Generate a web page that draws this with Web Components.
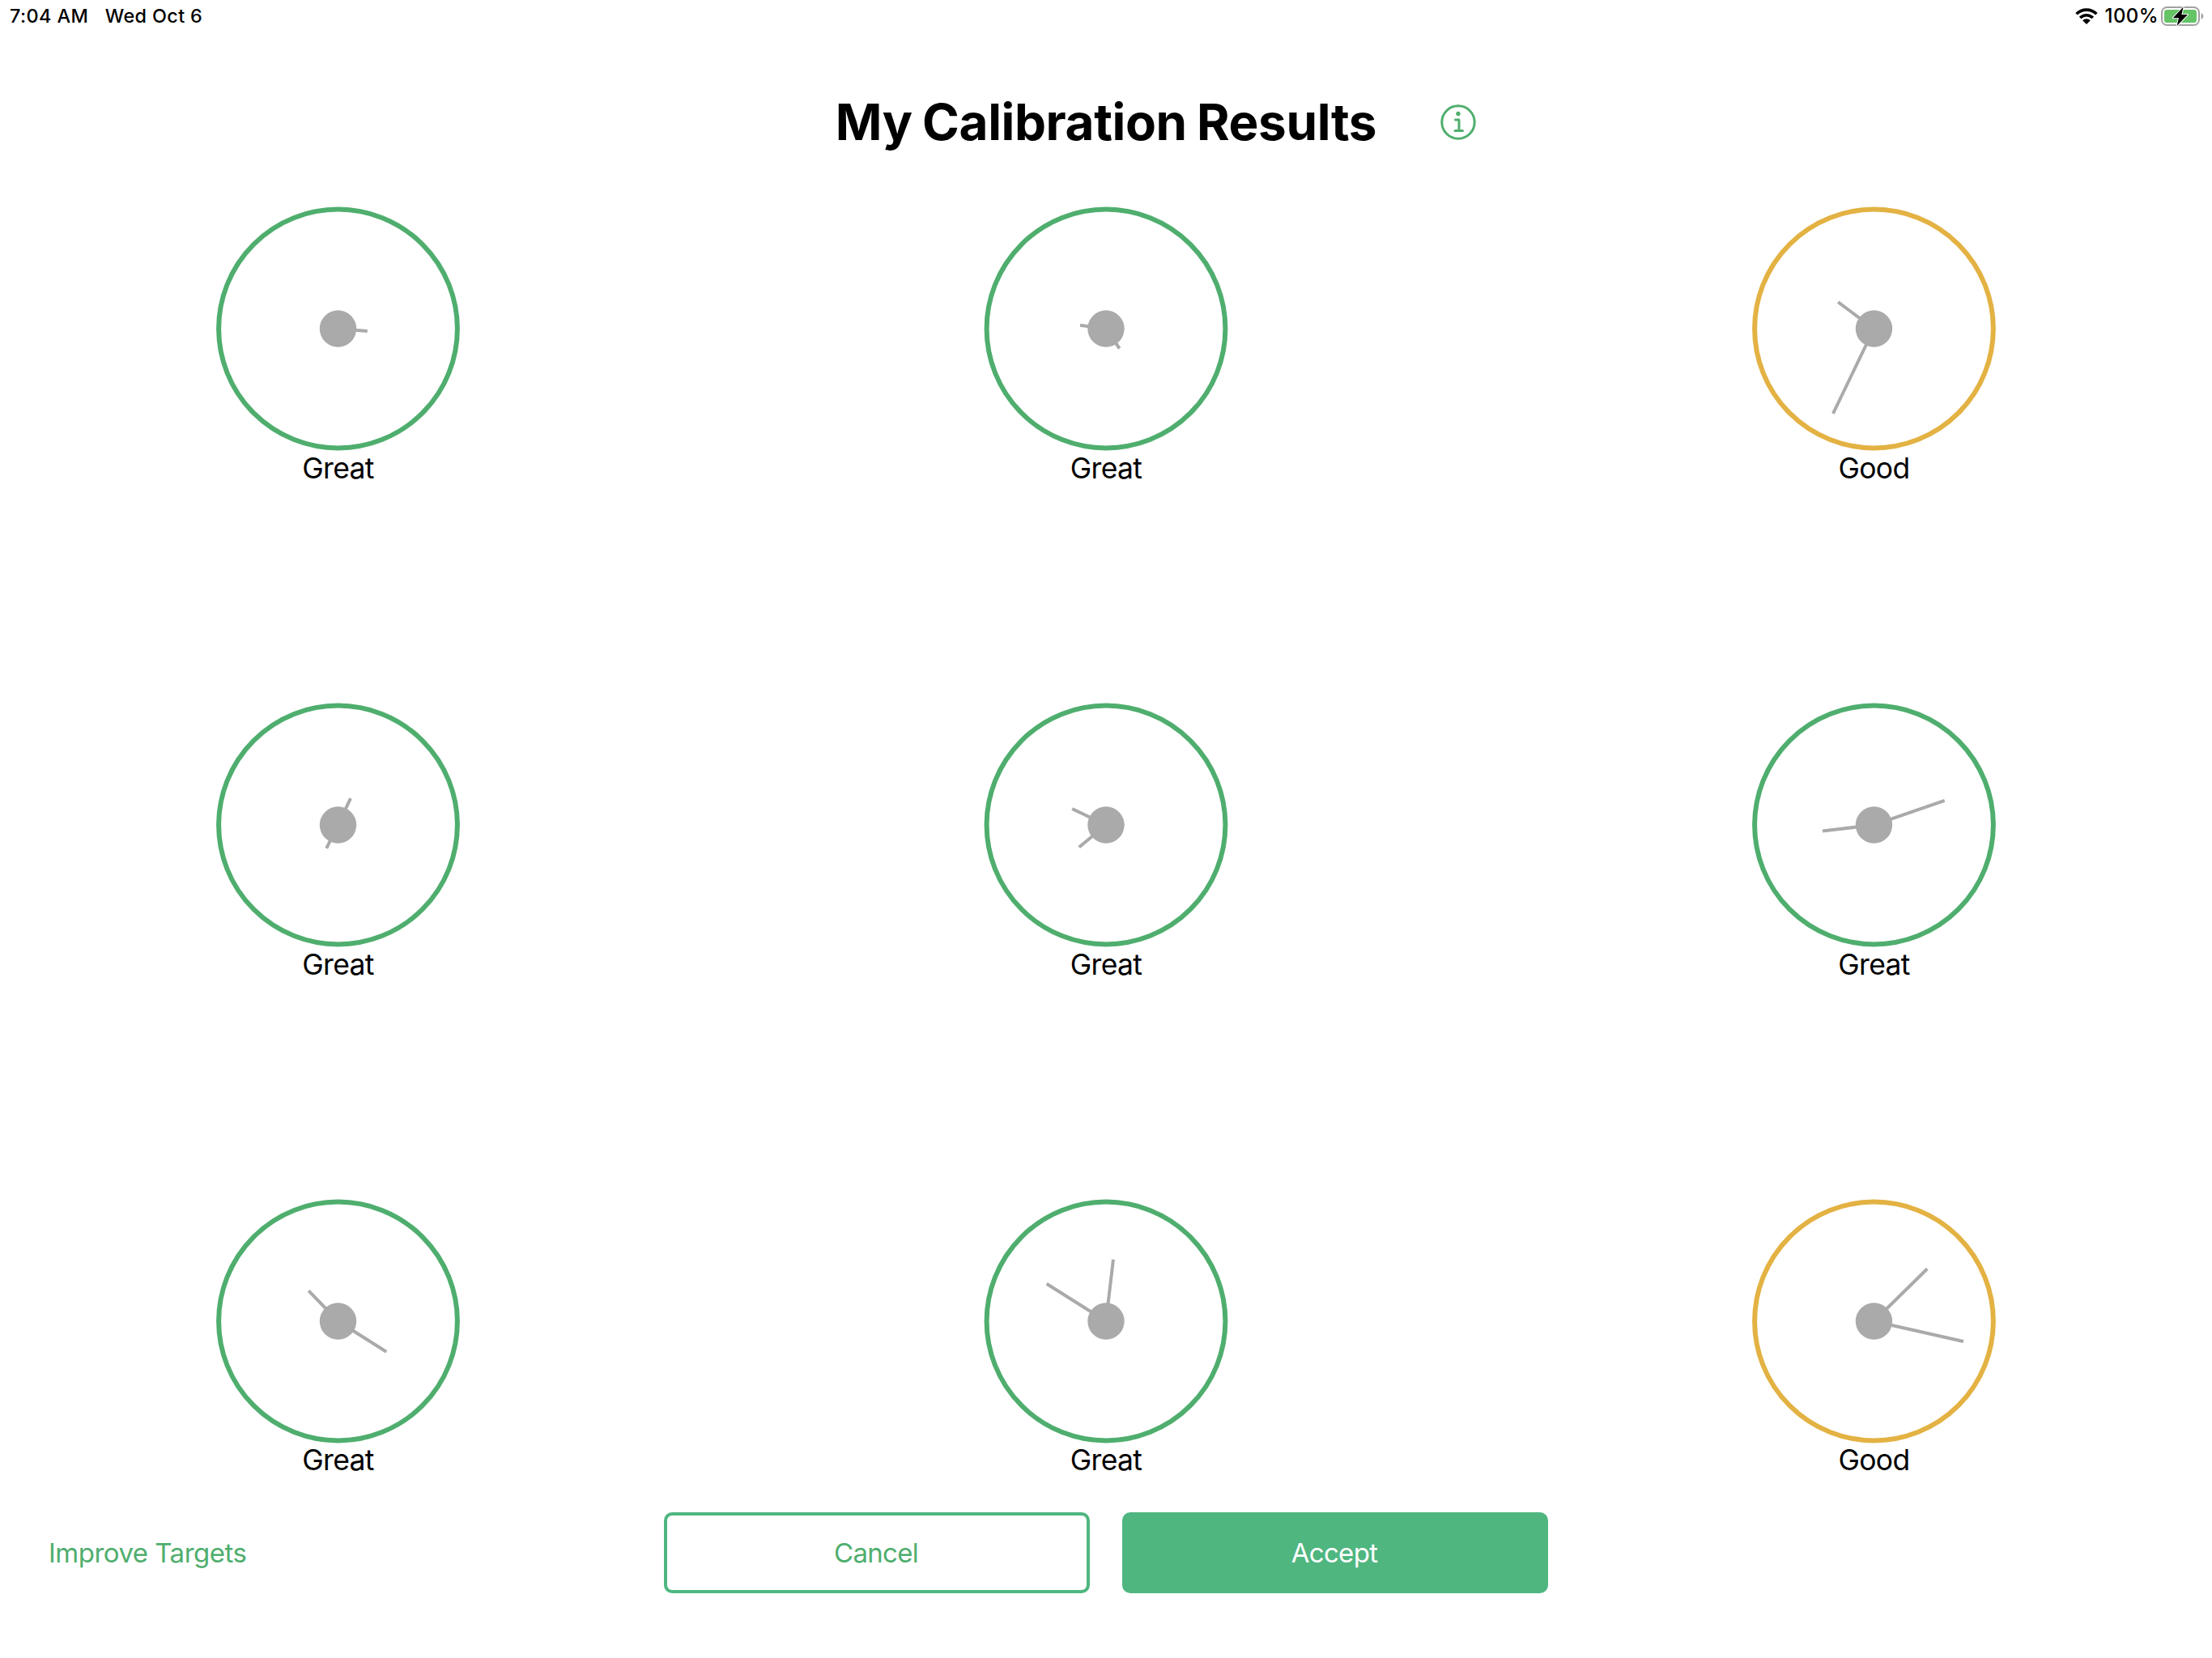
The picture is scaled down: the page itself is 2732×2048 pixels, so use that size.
<!DOCTYPE html>
<html lang="en">
<head>
<meta charset="utf-8">
<title>My Calibration Results</title>
<style>
  html, body { margin: 0; background: #fff; }
  body { font-family: Inter, "Liberation Sans", sans-serif; color: #000; }
</style>
</head>
<body>
<calibration-screen></calibration-screen>
<script>
  class StatusBar extends HTMLElement {
    constructor() {
      super();
      this.attachShadow({ mode: 'open' }).innerHTML = `
        <style>
          :host { display: flex; justify-content: space-between; height: 40px; padding: 0 9px 0 12px; box-sizing: border-box;
                  font-size: 23.4px; line-height: 40px; font-weight: 500; }
          div { display: flex; align-items: center; height: 40px; white-space: nowrap; }
          .clock { gap: 20.5px; }
          .time { letter-spacing: .42px; }
          .date { letter-spacing: .38px; }
          .level { font-size: 24px; letter-spacing: .4px; }
          svg { display: block; flex: none; }
          .wifi { margin-right: 9px; }
          .battery { margin-left: 3px; }
        </style>
        <div class="clock"><span class="time">7:04 AM</span><span class="date">Wed Oct 6</span></div>
        <div>
          <svg class="wifi" width="28" height="20" viewBox="0 0 28 20">
            <g fill="none" stroke="#000" stroke-width="3.7">
              <path d="M1.6 7.3A17.6 17.6 0 0 1 26.4 7.3"/>
              <path d="M6.2 12A11 11 0 0 1 21.8 12"/>
            </g>
            <path d="M14 20L9.2 15.2A6.8 6.8 0 0 1 18.8 15.2Z"/>
          </svg>
          <span class="level">100%</span>
          <svg class="battery" width="54" height="26" viewBox="0 0 54 26">
            <rect x="1" y="2" width="46" height="22" rx="6.5" fill="#fff" stroke="#a1a1a1" stroke-width="2"/>
            <rect x="4" y="5" width="40" height="16" rx="3.6" fill="#65c466"/>
            <path d="M49.6 9.2C53.2 10.4 53.2 15.6 49.6 16.8Z" fill="#a1a1a1"/>
            <path d="M27.6 1.6L14.8 15.2H22L19.6 25L33 11H25.4Z" fill="#000" stroke="#fff" stroke-width="2" paint-order="stroke" stroke-linejoin="round"/>
          </svg>
        </div>`;
    }
  }
  customElements.define('status-bar', StatusBar);

  class ScreenHeader extends HTMLElement {
    constructor() {
      super();
      this.attachShadow({ mode: 'open' }).innerHTML = `
        <style>
          :host { display: grid; grid-template-columns: 1fr auto 1fr; align-items: center; height: 80px; margin-top: 71px; }
          h1 { grid-column: 2; margin: 0; font-size: 62px; line-height: 80px; font-weight: 700; letter-spacing: -.4px; word-spacing: -2px; white-space: nowrap; }
          svg { display: block; margin: 0 0 1px 78px; }
        </style>
        <h1><slot></slot></h1>
        <svg width="46" height="46" viewBox="-23 -23 46 46" fill="none" stroke="#4fae6e" stroke-width="3">
          <circle r="20.2"/>
          <circle cy="-10.5" r="2.7" fill="#4fae6e" stroke="none"/>
          <path d="M-3.5 -3H1V10.4M-4 10.4H5.5" stroke-linecap="round" stroke-linejoin="round"/>
        </svg>`;
    }
  }
  customElements.define('screen-header', ScreenHeader);

  class TargetDial extends HTMLElement {
    connectedCallback() {
      const ring = this.getAttribute('grade') === 'good' ? '#e3b243' : '#4fae6e';
      const hands = this.getAttribute('hands').split(' ').map(p => {
        const [x, y] = p.split(',');
        return `<path d="M0 0L${x} ${y}"/>`;
      }).join('');
      this.attachShadow({ mode: 'open' }).innerHTML = `
        <style>
          :host { display: flex; flex-direction: column; align-items: center; }
          svg { display: block; width: 100%; height: 302px; }
          .label { font-size: 35.5px; line-height: 44px; margin-top: -.25px; letter-spacing: -.7px; white-space: nowrap; }
        </style>
        <svg viewBox="-150.5 -151 301 302">
          <circle r="147.4" fill="none" stroke="${ring}" stroke-width="6"/>
          <g stroke="#aaa" stroke-width="4">${hands}</g>
          <circle r="22.7" fill="#aaa"/>
        </svg>
        <div class="label"><slot></slot></div>`;
    }
  }
  customElements.define('target-dial', TargetDial);

  class ActionButton extends HTMLElement {
    constructor() {
      super();
      this.attachShadow({ mode: 'open' }).innerHTML = `
        <style>
          :host { display: block; }
          button { all: unset; box-sizing: border-box; display: block; text-align: center; white-space: nowrap;
                   color: #4fae6e; font-size: 33px; line-height: 92px; letter-spacing: -.52px; }
          :host([kind]) button { width: 526px; height: 100px; padding-right: 2px; border: 4px solid #4fb680; border-radius: 10px; letter-spacing: -.7px; }
          :host([kind=solid]) button { background: #4fb680; color: #fff; }
        </style>
        <button><slot></slot></button>`;
    }
  }
  customElements.define('action-button', ActionButton);

  class CalibrationScreen extends HTMLElement {
    constructor() {
      super();
      this.attachShadow({ mode: 'open' }).innerHTML = `
        <style>
          :host { display: flex; flex-direction: column; width: 2732px; height: 2048px; overflow: hidden; background: #fff; }
          main { display: grid; grid-template-columns: 301px 302px 301px; grid-auto-rows: 612.75px; justify-content: space-between;
                 padding: 0 267px; margin-top: 64px; height: 1613px; }
          footer { display: grid; grid-template-columns: 1fr auto 1fr; align-items: center; padding: 0 60px; }
          .center { display: flex; gap: 40px; }
          footer > action-button { justify-self: start; }
        </style>
        <status-bar></status-bar>
        <screen-header>My Calibration Results</screen-header>
        <main>
          <target-dial hands="36.3,2.9">Great</target-dial>
          <target-dial hands="-32,-4.3 16.7,24.5">Great</target-dial>
          <target-dial grade="good" hands="-44.3,-32.8 -50.5,104.8">Good</target-dial>
          <target-dial hands="15.5,-32.8 -14.3,28.8">Great</target-dial>
          <target-dial hands="-41.8,-20 -33.3,27.5">Great</target-dial>
          <target-dial hands="-63.5,7.5 87.2,-30.2">Great</target-dial>
          <target-dial hands="-36.3,-37.7 59.7,37.7">Great</target-dial>
          <target-dial hands="-73.3,-46.3 9,-76.3">Great</target-dial>
          <target-dial grade="good" hands="65.8,-64.7 110.5,25">Good</target-dial>
        </main>
        <footer>
          <action-button>Improve Targets</action-button>
          <div class="center"><action-button kind="outline">Cancel</action-button><action-button kind="solid">Accept</action-button></div>
        </footer>`;
    }
  }
  customElements.define('calibration-screen', CalibrationScreen);
</script>
</body>
</html>
